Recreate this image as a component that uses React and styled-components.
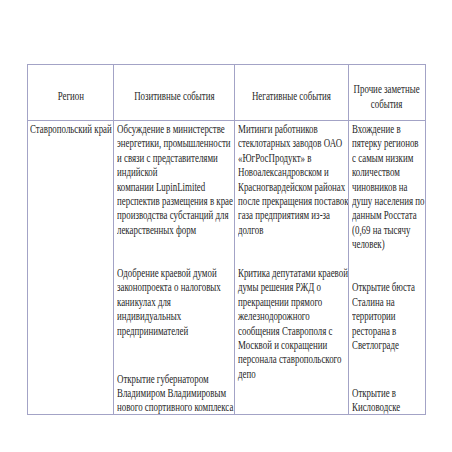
import React from "react";
import styled, { createGlobalStyle } from "styled-components";

const Global = createGlobalStyle`
  html, body { margin: 0; padding: 0; background: #ffffff; }
  body { font-family: "Liberation Serif", serif; color: #1f1f1f; }
`;

const Page = styled.div`
  width: 452px;
  height: 452px;
  padding: 64px 0 0 27px;
  box-sizing: border-box;
`;

const Table = styled.div`
  display: grid;
  grid-template-columns: 86px 121px 114px 77px;
  grid-template-rows: 56px 294px;
  border-top: 1px solid #a3a3c6;
  border-left: 1px solid #a3a3c6;
  width: max-content;
`;

const Cell = styled.div`
  box-sizing: border-box;
  border-right: 1px solid #a3a3c6;
  border-bottom: 1px solid #a3a3c6;
  font-family: "Liberation Serif", serif;
  font-size: 12px;
  line-height: 14.4px;
  white-space: nowrap;
  overflow: hidden;
`;

const HeadCell = styled(Cell)`
  display: flex;
  align-items: center;
  justify-content: center;
  padding: 8px 0 0;
`;

const HeadText = styled.span`
  display: inline-block;
  text-align: center;
  transform: scaleX(0.74);
  transform-origin: center center;
`;

const BodyCell = styled(Cell)`
  display: flex;
  flex-direction: column;
  align-items: flex-start;
  padding: 1px 0 0 ${(p) => p.$pad || 3}px;
`;

const Para = styled.div`
  width: max-content;
  margin-top: ${(p) => p.$gap || 0}px;
  transform: scaleX(0.74);
  transform-origin: left top;
`;

const Lines = ({ lines }) =>
  lines.map((l, i) => (
    <React.Fragment key={i}>
      {l}
      {i < lines.length - 1 && <br />}
    </React.Fragment>
  ));

const data = [
  [
    {
      gap: 0,
      lines: [
        "Обсуждение в министерстве",
        "энергетики, промышленности",
        "и связи с представителями",
        "индийской",
        "компании LupinLimited",
        "перспектив размещения в крае",
        "производства субстанций для",
        "лекарственных форм",
      ],
    },
    {
      gap: 28.8,
      lines: [
        "Одобрение краевой думой",
        "законопроекта о налоговых",
        "каникулах для",
        "индивидуальных",
        "предпринимателей",
      ],
    },
    {
      gap: 33.6,
      lines: [
        "Открытие губернатором",
        "Владимиром Владимировым",
        "нового спортивного комплекса",
      ],
    },
  ],
  [
    {
      gap: 0,
      lines: [
        "Митинги работников",
        "стеклотарных заводов ОАО",
        "«ЮгРосПродукт» в",
        "Новоалександровском и",
        "Красногвардейском районах",
        "после прекращения поставок",
        "газа предприятиям из-за",
        "долгов",
      ],
    },
    {
      gap: 28.8,
      lines: [
        "Критика депутатами краевой",
        "думы решения РЖД о",
        "прекращении прямого",
        "железнодорожного",
        "сообщения Ставрополя с",
        "Москвой и сокращении",
        "персонала ставропольского",
        "депо",
      ],
    },
  ],
  [
    {
      gap: 0,
      lines: [
        "Вхождение в",
        "пятерку регионов",
        "с самым низким",
        "количеством",
        "чиновников на",
        "душу населения по",
        "данным Росстата",
        "(0,69 на тысячу",
        "человек)",
      ],
    },
    {
      gap: 28.8,
      lines: [
        "Открытие бюста",
        "Сталина на",
        "территории",
        "ресторана в",
        "Светлограде",
      ],
    },
    {
      gap: 33.6,
      lines: ["Открытие в", "Кисловодске"],
    },
  ],
];

export default function App() {
  return (
    <Page>
      <Global />
      <Table>
        <HeadCell>
          <HeadText>Регион</HeadText>
        </HeadCell>
        <HeadCell>
          <HeadText>Позитивные события</HeadText>
        </HeadCell>
        <HeadCell>
          <HeadText>Негативные события</HeadText>
        </HeadCell>
        <HeadCell>
          <HeadText>
            Прочие заметные
            <br />
            события
          </HeadText>
        </HeadCell>
        <BodyCell $pad={2}>
          <Para>Ставропольский край</Para>
        </BodyCell>
        {data.map((col, ci) => (
          <BodyCell key={ci}>
            {col.map((p, pi) => (
              <Para key={pi} $gap={p.gap}>
                <Lines lines={p.lines} />
              </Para>
            ))}
          </BodyCell>
        ))}
      </Table>
    </Page>
  );
}
